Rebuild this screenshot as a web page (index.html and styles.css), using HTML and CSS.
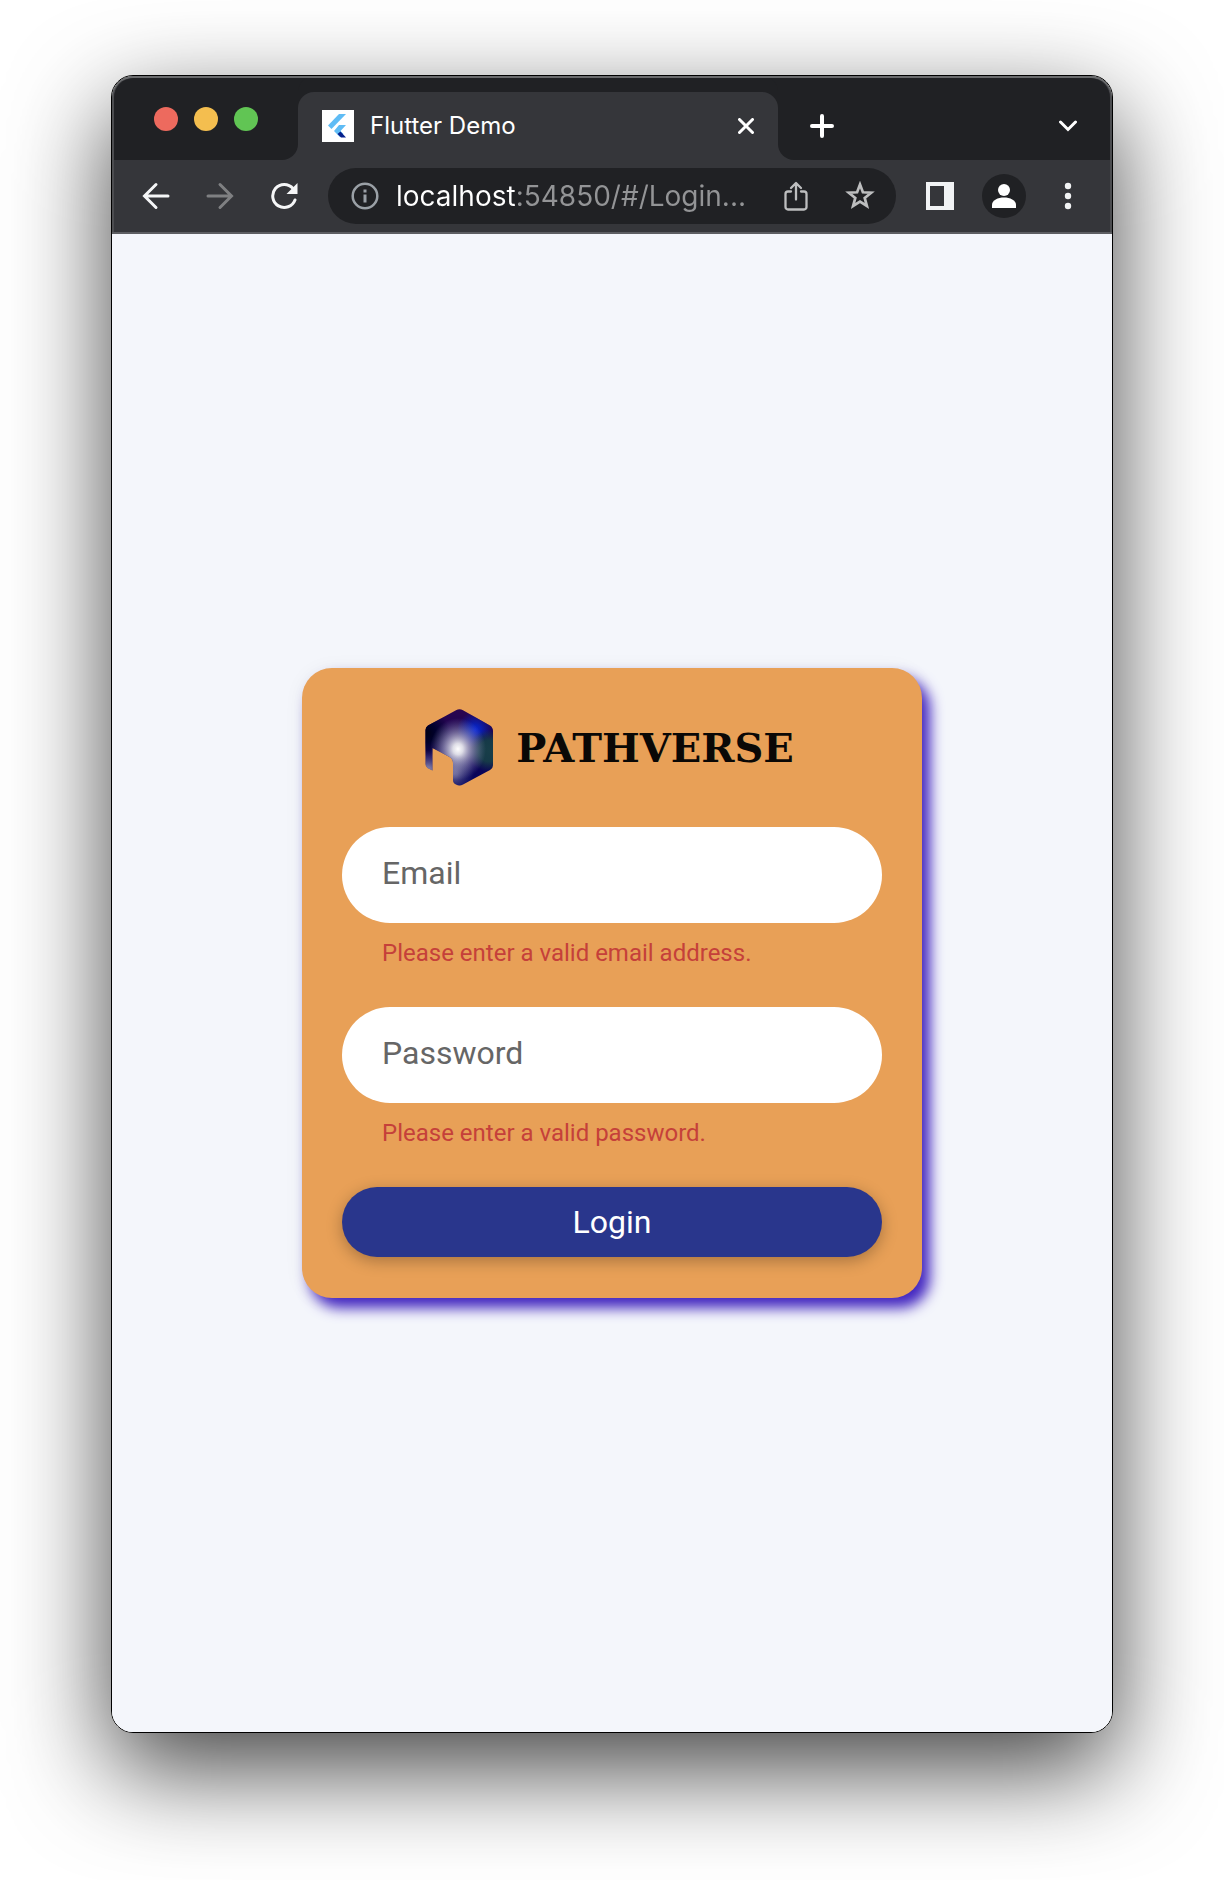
FILE: index.html
```html
<!DOCTYPE html>
<html lang="en">
<head>
<meta charset="utf-8">
<meta name="viewport" content="width=device-width, initial-scale=1">
<title>Flutter Demo</title>
<link rel="stylesheet" href="styles.css">
</head>
<body>
<div class="window">
  <header class="chrome">
    <div class="titlebar">
      <div class="lights">
        <button class="light light-close" aria-label="Close window"></button>
        <button class="light light-minimize" aria-label="Minimize window"></button>
        <button class="light light-zoom" aria-label="Zoom window"></button>
      </div>
      <div class="tab">
        <svg class="favicon" width="32" height="32" viewBox="0 0 32 32" aria-hidden="true">
          <path fill="#fff" d="M0 0h32v32H0z"/>
          <path fill="#5fbcf5" d="M17 4h7L9.500 19 6 15.500z"/>
          <path fill="#5fbcf5" d="M17 15h7l-5.500 6 3 3-3.500 3-6-6z"/>
          <path fill="#06208c" d="M15.500 24l3-2.500L24 27.500h-5z"/>
        </svg>
        <span class="tab-title">Flutter Demo</span>
        <button class="icon-button" aria-label="Close tab">
          <svg width="16" height="16" viewBox="0 0 16 16" fill="none" stroke="#fff" stroke-width="3" stroke-linecap="round"><path d="M1.500 1.500l13 13M14.500 1.500l-13 13"/></svg>
        </button>
      </div>
      <button class="icon-button new-tab" aria-label="New tab">
        <svg width="24" height="24" viewBox="0 0 24 24" fill="none" stroke="#fff" stroke-width="4" stroke-linecap="round"><path d="M12 2v20M2 12h20"/></svg>
      </button>
      <button class="icon-button tab-search" aria-label="Search tabs">
        <svg width="20" height="12" viewBox="0 0 20 12" fill="none" stroke="#fff" stroke-width="3" stroke-linecap="round"><path d="M2.500 2L10 9.500 17.500 2"/></svg>
      </button>
    </div>
    <nav class="toolbar" aria-label="Browser">
      <div class="nav-buttons">
        <button class="icon-button" aria-label="Back">
          <svg width="28" height="28" viewBox="0 0 28 28" fill="none" stroke="#f5f6f7" stroke-width="3" stroke-linecap="round"><path d="M26 14H3M14 2.500L2.500 14 14 25.500"/></svg>
        </button>
        <button class="icon-button" aria-label="Forward">
          <svg width="28" height="28" viewBox="0 0 28 28" fill="none" stroke="#7f8082" stroke-width="3" stroke-linecap="round"><path d="M2 14h23M14 2.500L25.500 14 14 25.500"/></svg>
        </button>
        <button class="icon-button" aria-label="Reload">
          <svg width="28" height="28" viewBox="0 0 28 28" fill="none"><path stroke="#f5f6f7" stroke-width="3" stroke-linecap="round" d="M25 18a11.500 11.500 0 1 1-2-11.500"/><path fill="#f5f6f7" d="M27.500 1v11h-11z"/></svg>
        </button>
      </div>
      <div class="omnibox">
        <button class="icon-button" aria-label="Site information">
          <svg width="28" height="28" viewBox="0 0 28 28" fill="none" stroke="#9aa0a6"><circle cx="14" cy="14" r="12.300" stroke-width="2.500"/><path stroke-width="3" d="M14 12.500v8M14 7.500v3"/></svg>
        </button>
        <input class="address" type="text" aria-label="Address" value="localhost:54850/#/Login...">
        <button class="icon-button" aria-label="Share">
          <svg width="24" height="30" viewBox="0 0 24 30" fill="none" stroke="#bdbebf" stroke-width="2.300" stroke-linecap="round" stroke-linejoin="round"><path d="M7 10.500H4A2.500 2.500 0 0 0 1.500 13v13A2.500 2.500 0 0 0 4 28.500h16a2.500 2.500 0 0 0 2.500-2.500V13a2.500 2.500 0 0 0-2.500-2.500h-3M12 18.500V2.500M7 7l5-5 5 5"/></svg>
        </button>
        <button class="icon-button" aria-label="Bookmark this page">
          <svg width="30" height="30" viewBox="0 0 30 30" fill="none" stroke="#bdbebf" stroke-width="2.700"><path d="M15 3.500l2.900 7.800 8.300.400-6.500 5.200 2.200 8.100L15 20.500l-6.900 4.500 2.200-8.100-6.500-5.200 8.300-.400z"/></svg>
        </button>
      </div>
      <div class="tool-buttons">
        <button class="icon-button" aria-label="Side panel">
          <svg width="28" height="28" viewBox="0 0 28 28"><path fill="#f1f3f4" fill-rule="evenodd" d="M0 0h28v28H0zM4 4v20h14V4z"/></svg>
        </button>
        <button class="icon-button avatar" aria-label="Profile">
          <svg width="24" height="24" viewBox="0 0 24 24" fill="#fff"><circle cx="12" cy="6" r="6"/><path d="M0 24v-3c0-5 6-7.500 12-7.500S24 16 24 21v3z"/></svg>
        </button>
        <button class="icon-button" aria-label="Menu">
          <svg width="28" height="28" viewBox="0 0 28 28" fill="#f1f3f4"><circle cx="14" cy="4" r="3.200"/><circle cx="14" cy="14" r="3.200"/><circle cx="14" cy="24" r="3.200"/></svg>
        </button>
      </div>
    </nav>
  </header>
  <main class="page">
    <form class="card" novalidate>
      <div class="brand">
        <svg width="70" height="80" viewBox="0 0 70 80" aria-hidden="true">
          <defs>
            <clipPath id="hex"><path d="M32 2.200Q35.500.300 39 2.200L66 17.500Q69 19.500 69 23V57Q69 60 66 62L39 76.500Q35.500 78.300 32 76.500Q29 75 29 72V55Q29 51 25.500 49L8.500 40V62.500L3.500 60Q1.500 58.500 1.500 56V22Q1.500 19 4 17.500z"/></clipPath>
            <linearGradient id="base" x1="0" y1="0" x2="0" y2="1"><stop offset="0" stop-color="#2b0450"/><stop offset=".3" stop-color="#1c0450"/><stop offset="1" stop-color="#03045c"/></linearGradient>
            <radialGradient id="dark"><stop offset="0" stop-color="#000014"/><stop offset=".4" stop-color="#00002c"/><stop offset="1" stop-color="#00002c" stop-opacity="0"/></radialGradient>
            <radialGradient id="blue"><stop offset="0" stop-color="#0826d8"/><stop offset=".3" stop-color="#0a20b4"/><stop offset="1" stop-color="#0a20b4" stop-opacity="0"/></radialGradient>
            <radialGradient id="teal"><stop offset="0" stop-color="#183e48"/><stop offset=".5" stop-color="#163a48"/><stop offset="1" stop-color="#163a48" stop-opacity="0"/></radialGradient>
            <radialGradient id="glow"><stop offset="0" stop-color="#fff"/><stop offset=".18" stop-color="#e8e8ee" stop-opacity=".95"/><stop offset=".6" stop-color="#a8a8c8" stop-opacity=".5"/><stop offset="1" stop-color="#8080b0" stop-opacity="0"/></radialGradient>
          </defs>
          <g clip-path="url(#hex)">
            <path fill="url(#base)" d="M0 0h70v80H0z"/>
            <circle cx="2" cy="25" r="24" fill="url(#dark)"/>
            <circle cx="51" cy="22" r="18" fill="url(#blue)"/>
            <circle cx="65" cy="43" r="21" fill="url(#teal)"/>
            <ellipse cx="34" cy="41" rx="28" ry="31" fill="url(#glow)"/>
            <circle cx="30" cy="66" r="20" fill="url(#glow)" opacity=".35"/>
            <circle cx="4" cy="62" r="20" fill="url(#glow)" opacity=".5"/>
          </g>
        </svg>
        <span class="brand-name">PATHVERSE</span>
      </div>
      <div class="field">
        <input class="field-input" id="email" type="email" placeholder="Email" aria-label="Email" aria-describedby="email-error">
        <p class="field-error" id="email-error">Please enter a valid email address.</p>
      </div>
      <div class="field">
        <input class="field-input" id="password" type="password" placeholder="Password" aria-label="Password" aria-describedby="password-error">
        <p class="field-error" id="password-error">Please enter a valid password.</p>
      </div>
      <button class="login" type="submit">Login</button>
    </form>
  </main>
</div>
</body>
</html>
```
FILE: styles.css
```css
* {
  box-sizing: border-box;
}

body {
  margin: 0;
  min-height: 100vh;
  padding: 75px 111px 147px;
  display: flex;
  background: #fff;
  font-family: Roboto, "Liberation Sans", sans-serif;
}

button,
input {
  margin: 0;
  padding: 0;
  border: 0;
  font-family: inherit;
}

button {
  cursor: pointer;
}

svg {
  display: block;
}

.window {
  flex: 1;
  min-width: 0;
  display: flex;
  flex-direction: column;
  border: 1px solid #000;
  border-radius: 22px;
  overflow: hidden;
  box-shadow: 0 36px 100px rgba(0, 0, 0, 0.74);
}

/* Browser chrome */

.chrome {
  background: #35363a;
  border-bottom: 2px solid #5d5e62;
  border-radius: 21px 21px 0 0;
  box-shadow: inset 0 2px #6a6b6d, inset 2px 0 #4c4d50, inset -2px 0 #4c4d50;
  font-family: Inter, "Liberation Sans", sans-serif;
}

.titlebar {
  height: 84px;
  margin: 0 2px;
  display: flex;
  align-items: flex-end;
}

.lights {
  align-self: stretch;
  width: 184px;
  padding: 0 0 0 40px;
  margin-top: 2px;
  display: flex;
  align-items: center;
  gap: 16px;
  background: #202124;
  border-radius: 20px 0 16px 0;
}

.light {
  width: 24px;
  height: 24px;
  border-radius: 50%;
}

.light-close {
  background: #ed6a5e;
}

.light-minimize {
  background: #f4be4f;
}

.light-zoom {
  background: #61c554;
}

.tab {
  width: 480px;
  height: 82px;
  padding: 14px 24px 0;
  display: flex;
  align-items: center;
  gap: 16px;
  background: linear-gradient(#202124 14px, transparent 14px);
  position: relative;
}

.tab::before {
  content: "";
  position: absolute;
  z-index: 0;
  inset: 0;
  top: 14px;
  background: #35363a;
  border-radius: 16px 16px 0 0;
  box-shadow: 0 -16px #202124;
  clip-path: inset(-14px 0 0 0);
}

.tab > * {
  position: relative;
}

.tab-title {
  flex: 1;
  color: #fff;
  font-size: 24px;
  line-height: 32px;
}

.icon-button {
  flex: none;
  display: flex;
  align-items: center;
  justify-content: center;
  background: none;
}

.new-tab {
  width: 88px;
  height: 82px;
  padding-top: 14px;
  background: #202124;
  border-radius: 0 0 0 16px;
}

.tab-search {
  flex: 1;
  height: 82px;
  padding: 14px 32px 0 0;
  justify-content: flex-end;
  background: #202124;
  border-radius: 0 20px 0 0;
}

.toolbar {
  height: 72px;
  padding: 0 30px;
  display: flex;
  align-items: center;
  gap: 30px;
}

.nav-buttons {
  display: flex;
  gap: 36px;
}

.omnibox {
  flex: 1;
  min-width: 0;
  height: 56px;
  padding: 0 21px 0 23px;
  display: flex;
  align-items: center;
  gap: 17px;
  background: #202124;
  border-radius: 28px;
}

.address {
  flex: 1;
  min-width: 0;
  height: 40px;
  margin-right: 16px;
  font-size: 28px;
  color: transparent;
  background: linear-gradient(to right, #fff 119px, #939496 119px);
  -webkit-background-clip: text;
  background-clip: text;
}

.omnibox .icon-button + .icon-button {
  margin-left: 20px;
}

.tool-buttons {
  display: flex;
  align-items: center;
  gap: 28px;
}

.avatar {
  width: 44px;
  height: 44px;
  background: #202124;
  border-radius: 50%;
}

/* Login page */

.page {
  flex: 1;
  padding: 40px;
  display: flex;
  align-items: center;
  justify-content: center;
  background: #f4f6fb;
}

.card {
  width: 100%;
  max-width: 620px;
  padding: 40px 40px 41px;
  display: flex;
  flex-direction: column;
  background: #e8a057;
  border-radius: 30px;
  box-shadow: 8px 10px 14px #4225c0, 0 2px 20px rgba(0, 0, 0, 0.06);
}

.brand {
  height: 119px;
  padding-right: 6px;
  display: flex;
  align-items: flex-start;
  justify-content: center;
  gap: 22px;
}

.brand-name {
  color: #0a0806;
  font-family: "DejaVu Serif", serif;
  font-size: 40px;
  font-weight: 700;
  line-height: 80px;
}

.field {
  height: 180px;
}

.field-input {
  width: 100%;
  height: 96px;
  padding: 0 40px 4px;
  color: #222;
  background: #fff;
  border-radius: 48px;
  font-size: 32px;
}

.field-input::placeholder {
  color: #666;
  opacity: 1;
}

.field-error {
  margin: 16px 40px 0;
  color: #c5403a;
  font-size: 24px;
  line-height: 28px;
}

.login {
  height: 70px;
  color: #fff;
  background: #29368c;
  border-radius: 35px;
  box-shadow: 0 4px 16px rgba(0, 0, 0, 0.28);
  font-size: 32px;
  font-weight: 400;
}
```
